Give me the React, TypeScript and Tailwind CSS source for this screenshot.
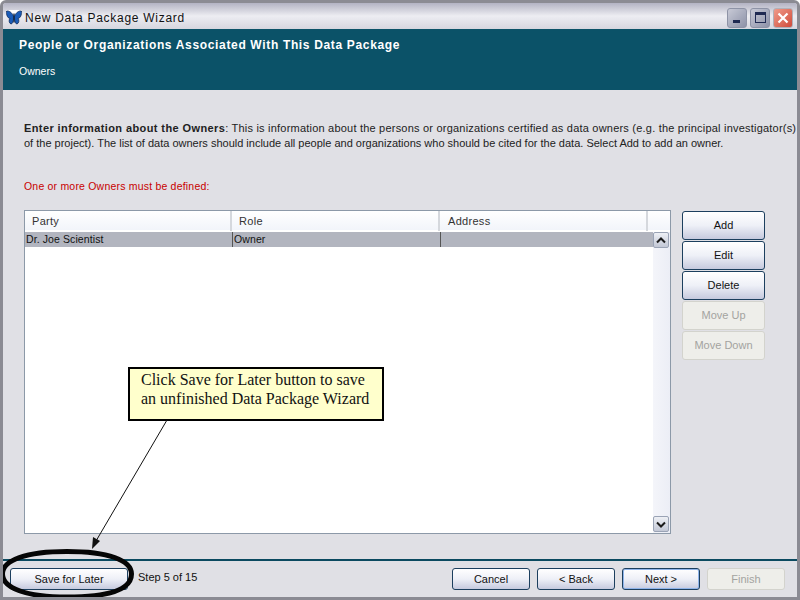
const UI_FONT = "font-['Liberation_Sans',Arial,sans-serif]"

function WizButton({ label, disabled, focused, className = '' }: { label: string; disabled?: boolean; focused?: boolean; className?: string }) {
  if (disabled) {
    return (
      <div className={`flex items-center justify-center rounded-[3px] border border-[#d3d3cd] bg-[#eeeeea] text-[11px] text-[#a3a3a0] ${className}`}>
        {label}
      </div>
    )
  }
  return (
    <div className={`flex items-center justify-center rounded-[3px] border border-[#1c3f5e] bg-gradient-to-b from-white via-[#eef0f7] to-[#c6cade] text-[11px] text-[#111] ${focused ? 'shadow-[inset_0_0_0_1px_#8fb4ea]' : ''} ${className}`}>
      {label}
    </div>
  )
}

function ScrollArrow({ up }: { up?: boolean }) {
  return (
    <div className="flex h-[16px] w-[16px] items-center justify-center rounded-[2px] border border-[#9aa3b5] bg-gradient-to-b from-[#eef0f5] to-[#c3c8d6]">
      <svg width="10" height="7" viewBox="0 0 10 7">
        <path d={up ? 'M1 5.5 L5 1.5 L9 5.5' : 'M1 1.5 L5 5.5 L9 1.5'} fill="none" stroke="#1a1a1a" strokeWidth="2" />
      </svg>
    </div>
  )
}

function TitleBar() {
  return (
    <div className="flex h-[26px] shrink-0 items-center justify-between bg-gradient-to-b from-[#b3b3c3] via-[#ededf2] to-[#d6d6df] pl-[3px] pr-[4px] pt-[3px]">
      <div className="flex items-center gap-[3px]">
        <svg width="16" height="15" viewBox="0 0 16 15">
          <rect width="16" height="4" fill="#fff" />
          <path d="M7.5 6 C6 2.5 3 0.5 0.5 1 C0.2 5 1.5 8 4 8.5 C2.5 9.5 3 13.5 5 14 C6.5 14 7.5 11 7.5 9 Z" fill="#1a5cb8" stroke="#0b2450" strokeWidth="0.7" />
          <path d="M8.5 6 C10 2.5 13 0.5 15.5 1 C15.8 5 14.5 8 12 8.5 C13.5 9.5 13 13.5 11 14 C9.5 14 8.5 11 8.5 9 Z" fill="#1a5cb8" stroke="#0b2450" strokeWidth="0.7" />
          <rect x="7.4" y="3.5" width="1.2" height="9" fill="#0b1f3a" />
        </svg>
        <span className="text-[12px] tracking-[0.72px] text-[#111]">New Data Package Wizard</span>
      </div>
      <div className="flex items-center gap-[3px]">
        <div className="relative h-[20px] w-[20px] rounded-[3px] border border-[#8e93a6] bg-gradient-to-br from-[#c8cad6] to-[#8d92a8]">
          <div className="absolute bottom-[4px] left-[5px] h-[3px] w-[7px] bg-[#1f2a52]" />
        </div>
        <div className="flex h-[20px] w-[20px] items-center justify-center rounded-[3px] border border-[#8e93a6] bg-gradient-to-br from-[#c8cad6] to-[#8d92a8]">
          <div className="h-[11px] w-[11px] border border-t-[3px] border-[#1f2a52]" />
        </div>
        <div className="flex h-[20px] w-[20px] items-center justify-center rounded-[3px] border border-[#b0b0b8] bg-gradient-to-br from-[#ef9a8a] to-[#cf4a3a]">
          <svg width="12" height="12" viewBox="0 0 12 12">
            <path d="M1.5 1.5 L10.5 10.5 M10.5 1.5 L1.5 10.5" stroke="#fff" strokeWidth="2.2" />
          </svg>
        </div>
      </div>
    </div>
  )
}

function OwnersTable() {
  return (
    <div className="flex h-[324px] w-[647px] flex-col border border-[#8c99a8] bg-white">
      <div className="grid h-[19px] shrink-0 grid-cols-[207px_208px_208px] bg-gradient-to-b from-white to-[#f2f5fa] text-[11px] tracking-[0.3px] text-[#333]">
        <div className="border-r-2 border-[#d5d8dd] pl-[7px] leading-[20px]">Party</div>
        <div className="border-r-2 border-[#d5d8dd] pl-[7px] leading-[20px]">Role</div>
        <div className="border-r-2 border-[#d5d8dd] pl-[8px] leading-[20px]">Address</div>
      </div>
      <div className="flex flex-1 pt-[2px]">
        <div className="min-w-0 flex-1">
          <div className="grid h-[15px] grid-cols-[208px_208px_1fr] bg-[#b2b5bf] text-[10.5px] leading-[15px] tracking-[0.1px] text-[#111]">
            <div className="border-r border-[#555] pl-[1px]">Dr. Joe Scientist</div>
            <div className="border-r border-[#555] pl-[1px]">Owner</div>
            <div />
          </div>
        </div>
        <div className="flex w-[17px] flex-col justify-between bg-gradient-to-r from-[#f4f5fa] to-[#eceef6] pb-[1px]">
          <ScrollArrow up />
          <ScrollArrow />
        </div>
      </div>
    </div>
  )
}

export default function App() {
  return (
    <div className={`relative flex h-[600px] w-[800px] flex-col overflow-hidden rounded-t-[6px] border-x-[3px] border-b-[3px] border-t-[3px] border-[#8b8b93] bg-[#e0e0e5] ${UI_FONT}`}>
      <TitleBar />

      <div className="flex h-[61px] shrink-0 flex-col bg-[#0b5268] pl-[16px] pt-[8px] text-white">
        <div className="text-[12px] font-bold leading-[16px] tracking-[0.66px]">People or Organizations Associated With This Data Package</div>
        <div className="mt-[11px] text-[10.5px] leading-[14px]">Owners</div>
      </div>

      <div className="flex flex-1 flex-col pl-[21px] pr-[32px] pt-[31px]">
        <p className="whitespace-nowrap text-[11px] leading-[15px] text-[#222]">
          <b className="tracking-[0.4px]">Enter information about the Owners</b>
          <span className="tracking-[0.21px]">: This is information about the persons or organizations certified as data owners (e.g. the principal investigator(s)</span>
          <br />
          of the project). The list of data owners should include all people and organizations who should be cited for the data. Select Add to add an owner.
        </p>
        <div className="mt-[28px] text-[10.5px] leading-[15px] tracking-[0.2px] text-[#c80000]">One or more Owners must be defined:</div>
        <div className="mt-[16px] flex gap-[11px]">
          <OwnersTable />
          <div className="flex flex-col gap-px pt-[1px]">
            <WizButton label="Add" className="h-[29px] w-[83px]" />
            <WizButton label="Edit" className="h-[29px] w-[83px]" />
            <WizButton label="Delete" className="h-[29px] w-[83px]" />
            <WizButton label="Move Up" disabled className="h-[29px] w-[83px]" />
            <WizButton label="Move Down" disabled className="h-[29px] w-[83px]" />
          </div>
        </div>
      </div>

      <div className="flex h-[38px] shrink-0 items-center justify-between border-t-2 border-[#0b4a60] pl-[7px] pr-[12px]">
        <div className="flex items-center gap-[10px]">
          <WizButton label="Save for Later" className="h-[22px] w-[118px]" />
          <span className="mb-[3px] text-[11px] text-[#111]">Step 5 of 15</span>
        </div>
        <div className="flex gap-[7px]">
          <WizButton label="Cancel" className="h-[22px] w-[78px]" />
          <WizButton label="< Back" className="h-[22px] w-[78px]" />
          <WizButton label="Next >" focused className="h-[22px] w-[78px]" />
          <WizButton label="Finish" disabled className="h-[22px] w-[78px]" />
        </div>
      </div>

      {/* annotation laid over the wizard screenshot */}
      <div className="absolute left-[125px] top-[364px] flex h-[54px] w-[256px] flex-col justify-center border-2 border-black bg-[#ffffcc] pb-[10px] pl-[11px] font-['Liberation_Serif',serif] text-[16px] leading-[19px] text-[#111]">
        <div>Click Save for Later button to save</div>
        <div>an unfinished Data Package Wizard</div>
      </div>
      <svg className="absolute left-[-3px] top-[-3px]" width="800" height="600" viewBox="0 0 800 600">
        <path d="M167 420 L96 541" stroke="#111" strokeWidth="1" />
        <path d="M92 549 L93 537 L100 541 Z" fill="#111" />
        <path d="M67 551.5 C108 551.5 131.5 560 131.5 574 C131.5 589 112 597 67 597 C26 597 2.5 588 2.5 574 C2.5 560 26 551.5 67 551.5 Z" fill="none" stroke="#050505" strokeWidth="5" />
      </svg>
    </div>
  )
}
